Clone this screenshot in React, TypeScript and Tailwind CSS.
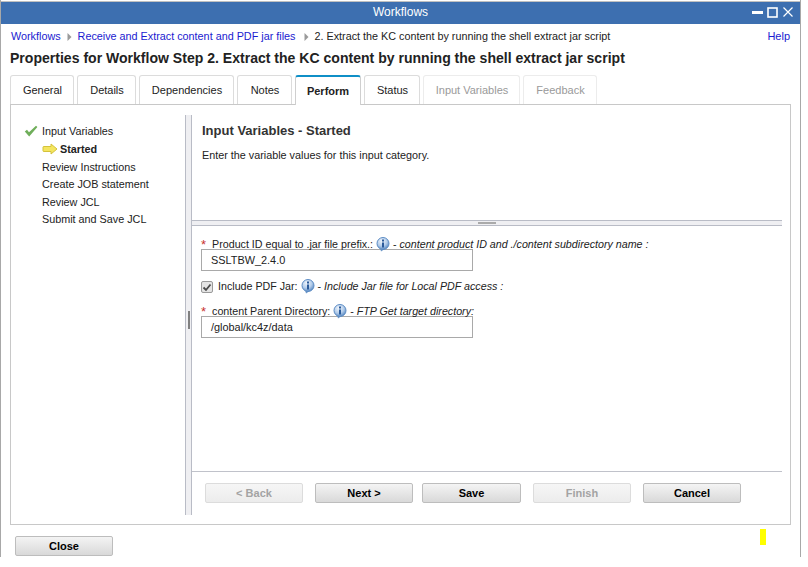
import React from "react";

const FONT = "font-['Liberation_Sans',Arial,sans-serif]";

function InfoIcon() {
  return (
    <svg width="14" height="15" viewBox="0 0 14 15" className="inline-block">
      <defs>
        <radialGradient id="infoBg" cx="40%" cy="30%" r="75%">
          <stop offset="0%" stopColor="#f1f6fc" />
          <stop offset="55%" stopColor="#b4cdea" />
          <stop offset="100%" stopColor="#4f82bf" />
        </radialGradient>
      </defs>
      <path d="M4 11 L5 14.5 L8 12.5 Z" fill="#6d97c8" />
      <circle cx="7" cy="6.5" r="6" fill="url(#infoBg)" stroke="#5c8cc4" strokeWidth="1" />
      <rect x="6" y="5.5" width="2" height="5" fill="#2a5a9a" />
      <rect x="6" y="2.5" width="2" height="2" fill="#2a5a9a" />
    </svg>
  );
}

function Required() {
  return <span className="text-[#c8322e] text-[13px] leading-none mr-[6px]">*</span>;
}

function Tab({ label, active, disabled, w }: { label: string; active?: boolean; disabled?: boolean; w: string }) {
  return (
    <div
      className={`${w} flex items-center justify-center rounded-t-[3px] border border-b-0 text-[11px] bg-white ${
        active
          ? "h-[30px] -mb-px relative border-t-[2px] border-t-[#0f8fc7] border-x-[#cfcfcf] font-bold text-[#222]"
          : "h-[29px] pt-px pl-px"
      } ${!active && disabled ? "text-[#9a9a9a] border-[#ececec]" : ""} ${!active && !disabled ? "text-[#222] border-[#dcdcdc]" : ""}`}
    >
      {label}
    </div>
  );
}

function Btn({ label, disabled, w }: { label: string; disabled?: boolean; w: string }) {
  return (
    <button
      className={`${w} h-[20px] rounded-[2px] border text-[11px] font-bold flex items-center justify-center ${
        disabled
          ? "border-[#dcdcdc] bg-gradient-to-b from-[#f6f6f6] to-[#ececec] text-[#a3a3a3]"
          : "border-[#bdbdbd] bg-gradient-to-b from-[#f4f4f4] to-[#d9d9d9] text-black"
      }`}
    >
      {label}
    </button>
  );
}

function Arrow({ className }: { className: string }) {
  return (
    <svg width="5" height="8" viewBox="0 0 5 8" className={className}>
      <path d="M0.5 0 L4.5 4 L0.5 8 Z" fill="#9a9a9a" />
    </svg>
  );
}

export default function App() {
  return (
    <div className={`${FONT} relative w-[808px] h-[567px] bg-white overflow-hidden`}>
      {/* dialog window */}
      <div className="w-[801px] h-[557px] border-x-[1px] border-[#a8a8a8] flex flex-col bg-white">
        <div className="h-[23px] mt-[1px] bg-[#3d6fb0] border-t border-[#c0c0c0] flex items-center relative text-white text-[12px] pb-[3px] shrink-0">
          <div className="flex-1 text-center">Workflows</div>
          <div className="absolute right-[6px] top-[4px] flex items-center gap-[4px]">
            <svg width="11" height="13" viewBox="0 0 11 13"><rect x="0" y="5" width="11" height="3" fill="#fff" /></svg>
            <svg width="11" height="13" viewBox="0 0 11 13"><rect x="1" y="2" width="9" height="9" fill="none" stroke="#fff" strokeWidth="1.6" /></svg>
            <svg width="12" height="13" viewBox="0 0 12 13"><path d="M1.5 1.5 L10.5 10.5 M10.5 1.5 L1.5 10.5" stroke="#fff" strokeWidth="1.2" /></svg>
          </div>
        </div>

        <div className="flex items-center justify-between pl-[10px] pr-[10px] h-[25px] text-[10.8px] text-[#222] shrink-0">
          <div className="flex items-center">
            <span className="text-[#1a1ad0]">Workflows</span>
            <Arrow className="ml-[6px] mr-[6px]" />
            <span className="text-[#1a1ad0]">Receive and Extract content and PDF jar files</span>
            <Arrow className="ml-[9px] mr-[5px]" />
            <span>2. Extract the KC content by running the shell extract jar script</span>
          </div>
          <span className="text-[#1a1ad0] text-[11px]">Help</span>
        </div>

        <div className="pl-[9px] h-[20px] flex items-center text-[14.05px] font-bold text-[#222] shrink-0">
          Properties for Workflow Step 2. Extract the KC content by running the shell extract jar script
        </div>

        <div className="pl-[9px] flex gap-[3px] items-end h-[35px] shrink-0">
          <Tab label="General" w="w-[64px]" />
          <Tab label="Details" w="w-[59px]" />
          <Tab label="Dependencies" w="w-[95px]" />
          <Tab label="Notes" w="w-[55px]" />
          <Tab label="Perform" w="w-[66px]" active />
          <Tab label="Status" w="w-[56px]" />
          <Tab label="Input Variables" w="w-[97px]" disabled />
          <Tab label="Feedback" w="w-[74px]" disabled />
        </div>

        {/* tab body */}
        <div className="ml-[9px] w-[781px] h-[421px] border border-[#c8c8c8] flex pt-[10px] pb-[9px] shrink-0">
          <div className="w-[174px] pl-[31px] pt-[7px] text-[10.8px] text-[#222] relative shrink-0">
            <div className="h-[18px] flex items-center">
              <svg width="14" height="12" viewBox="0 0 14 12" className="absolute left-[13px]">
                <path d="M0.8 6.5 L3 4.8 L5 7.2 L12 0.8 L13.4 2 L5.2 11.4 Z" fill="#6fae5a" />
              </svg>
              Input Variables
            </div>
            <div className="h-[18px] flex items-center font-bold pl-[18px] relative">
              <svg width="16" height="12" viewBox="0 0 16 12" className="absolute left-0">
                <path d="M1 4 Q1 3.5 2 3.5 H9 V1 L15 6 L9 11 V8.5 H2 Q1 8.5 1 8 Z" fill="#f4e55f" stroke="#d4c23c" strokeWidth="1" strokeLinejoin="round" />
              </svg>
              Started
            </div>
            <div className="h-[18px] flex items-center">Review Instructions</div>
            <div className="h-[17px] flex items-center">Create JOB statement</div>
            <div className="h-[18px] flex items-center">Review JCL</div>
            <div className="h-[17px] flex items-center">Submit and Save JCL</div>
          </div>

          {/* vertical splitter */}
          <div className="w-[7px] bg-[#efeff2] border-x border-[#b9bcc6] flex items-center justify-center pt-[10px] shrink-0">
            <div className="w-[2px] h-[18px] bg-[#808080]" />
          </div>

          <div className="flex-1 flex flex-col pr-[8px] min-w-0">
            <div className="h-[105px] pl-[10px] pt-[7px] shrink-0">
              <div className="text-[13px] font-bold text-[#333] leading-[18px]">Input Variables - Started</div>
              <div className="text-[10.8px] text-[#222] mt-[8px] leading-[14px]">Enter the variable values for this input category.</div>
            </div>
            <div className="h-[6px] bg-[#efeff2] border-y border-[#b9bcc6] flex items-center justify-center shrink-0">
              <div className="w-[18px] h-[2px] bg-[#aaa]" />
            </div>

            <div className="flex-1 pl-[9px] pt-[13px] text-[10.7px] text-[#222]">
              <div className="h-[10px] flex items-center whitespace-pre">
                <Required />
                <span>Product ID equal to .jar file prefix.: </span>
                <InfoIcon />
                <span> - </span>
                <i>content product ID and ./content subdirectory name :</i>
              </div>
              <div className="w-[272px] h-[22px] border border-[#a9a9a9] pl-[9px] flex items-center text-[10.9px] text-[#222]">SSLTBW_2.4.0</div>

              <div className="h-[18px] mt-[6px] flex items-center whitespace-pre">
                <span className="relative top-px w-[12px] h-[12px] mr-[5px] border border-[#9a9a9a] rounded-[2px] bg-[#e4e4e4] flex items-center justify-center">
                  <svg width="10" height="9" viewBox="0 0 10 9">
                    <path d="M1.5 4.5 L4 7 L8.5 1.5" fill="none" stroke="#4a4a4a" strokeWidth="1.8" />
                  </svg>
                </span>
                <span>Include PDF Jar: </span>
                <InfoIcon />
                <span> - </span>
                <i>Include Jar file for Local PDF access :</i>
              </div>

              <div className="h-[10px] mt-[11px] flex items-center whitespace-pre">
                <Required />
                <span>content Parent Directory: </span>
                <InfoIcon />
                <span> - </span>
                <i>FTP Get target directory:</i>
              </div>
              <div className="w-[272px] h-[22px] border border-[#a9a9a9] pl-[9px] flex items-center text-[10.9px] text-[#222]">/global/kc4z/data</div>
            </div>

            <div className="h-[44px] border-t border-[#c0c2ca] pt-[11px] pl-[13px] flex shrink-0">
              <Btn label="< Back" disabled w="w-[98px]" />
              <div className="w-[12px]" />
              <Btn label="Next >" w="w-[98px]" />
              <div className="w-[9px]" />
              <Btn label="Save" w="w-[99px]" />
              <div className="w-[12px]" />
              <Btn label="Finish" disabled w="w-[98px]" />
              <div className="w-[12px]" />
              <Btn label="Cancel" w="w-[98px]" />
            </div>
          </div>
        </div>

        <div className="pl-[14px] pt-[11px]">
          <Btn label="Close" w="w-[98px]" />
        </div>
      </div>
      <div className="absolute left-[760px] top-[529px] w-[6px] h-[16px] bg-[#ffff00]" />
    </div>
  );
}
